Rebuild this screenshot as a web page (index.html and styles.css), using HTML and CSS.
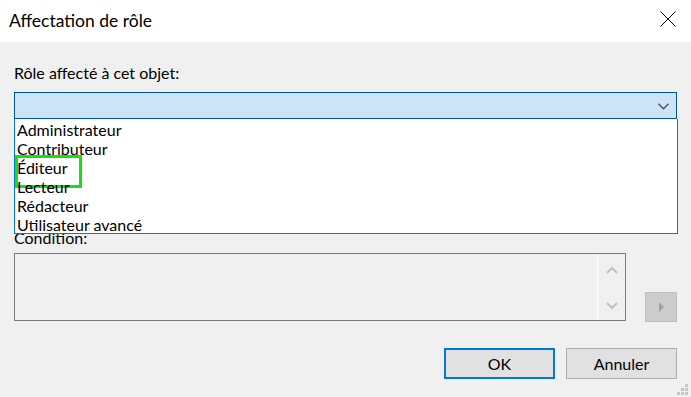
FILE: index.html
```html
<!DOCTYPE html>
<html lang="fr">
<head>
<meta charset="utf-8">
<title>Affectation de rôle</title>
<link rel="stylesheet" href="styles.css">
</head>
<body>
<div class="window">
  <header class="titlebar">
    <span class="title">Affectation de rôle</span>
    <svg class="close" width="16" height="16" viewBox="0 0 16 16"><path d="M0.5 0.5L15.5 15.5M15.5 0.5L0.5 15.5" stroke="#000" stroke-width="1" fill="none"/></svg>
  </header>
  <main class="content">
    <div class="field-label">Rôle affecté à cet objet:</div>
    <div class="combo-wrap">
      <div class="combo">
        <svg class="chevron" width="11" height="7" viewBox="0 0 11 7"><path d="M0.5 0.8L5.5 5.8L10.5 0.8" stroke="#4a4a4a" stroke-width="1.3" fill="none"/></svg>
      </div>
      <ul class="dropdown">
        <li>Administrateur</li>
        <li>Contributeur</li>
        <li class="marked">Éditeur</li>
        <li>Lecteur</li>
        <li>Rédacteur</li>
        <li>Utilisateur avancé</li>
      </ul>
    </div>
    <div class="cond-label">Condition:</div>
    <div class="cond-row">
      <div class="textarea">
        <div class="text-area-body"></div>
        <div class="vscroll">
          <svg width="12" height="8" viewBox="0 0 12 8"><path d="M1 7L6 2L11 7" stroke="#c2c2c2" stroke-width="2" fill="none"/></svg>
          <svg width="12" height="8" viewBox="0 0 12 8"><path d="M1 1L6 6L11 1" stroke="#c2c2c2" stroke-width="2" fill="none"/></svg>
        </div>
      </div>
      <button class="arrow-btn" type="button"><svg width="5" height="10" viewBox="0 0 5 10"><path d="M0 0L5 5L0 10Z" fill="#a0a0a0"/></svg></button>
    </div>
    <div class="actions">
      <button class="btn btn-default" type="button">OK</button>
      <button class="btn" type="button">Annuler</button>
    </div>
  </main>
  <svg class="grip" width="12" height="12" viewBox="0 0 12 12">
    <rect x="8" y="0" width="3" height="3" fill="#c6c6c6"/>
    <rect x="4" y="4" width="3" height="3" fill="#c6c6c6"/>
    <rect x="8" y="4" width="3" height="3" fill="#c6c6c6"/>
    <rect x="0" y="8" width="3" height="3" fill="#c6c6c6"/>
    <rect x="4" y="8" width="3" height="3" fill="#c6c6c6"/>
    <rect x="8" y="8" width="3" height="3" fill="#c6c6c6"/>
  </svg>
</div>
</body>
</html>
```

FILE: styles.css
```css
* { box-sizing: border-box; }
html, body { margin: 0; padding: 0; }
body {
  width: 691px;
  height: 397px;
  overflow: hidden;
  font-family: Lato, "Noto Sans", "Liberation Sans", sans-serif;
  color: #000;
}
.window {
  position: relative;
  width: 691px;
  height: 397px;
  background: #f0f0f0;
}
.titlebar {
  height: 42px;
  background: #fff;
  display: flex;
  align-items: center;
  justify-content: space-between;
  padding: 0 15px 0 9px;
}
.title {
  font-size: 17.5px;
  padding-bottom: 2px;
}
.close { margin-top: -4px; }
.content {
  padding: 0 14px;
}
.field-label {
  margin-top: 20px;
  height: 22px;
  line-height: 22px;
  font-size: 16px;
}
.combo-wrap {
  position: relative;
  margin-top: 8px;
}
.combo {
  height: 27px;
  background: #cce4f7;
  border: 1px solid #005499;
  display: flex;
  align-items: center;
  justify-content: flex-end;
  padding-right: 7px;
}
.chevron { margin-top: 1px; }
.dropdown {
  position: absolute;
  top: 27px;
  left: 0;
  width: 664px;
  height: 115px;
  margin: 0;
  padding: 1px 0 0 2px;
  list-style: none;
  background: #fff;
  border: 1px solid #0078d7;
  border-top: none;
  z-index: 2;
  font-size: 16px;
}
.dropdown li {
  height: 19px;
  line-height: 19px;
  position: relative;
  white-space: nowrap;
}
.dropdown li.marked::after {
  content: "";
  position: absolute;
  left: -2px;
  top: -3px;
  width: 61px;
  height: 27px;
  border: 3px solid #14e014;
}
.cond-label {
  margin-top: 108px;
  height: 26px;
  line-height: 22px;
  font-size: 16px;
}
.cond-row {
  display: flex;
  align-items: flex-end;
  gap: 19px;
}
.textarea {
  width: 612px;
  height: 68px;
  border: 1px solid #7a7a7a;
  background: #f0f0f0;
  display: flex;
}
.text-area-body { flex: 1; }
.vscroll {
  width: 28px;
  border-left: 1px solid #fff;
  display: flex;
  flex-direction: column;
  justify-content: space-between;
  align-items: center;
  padding: 12px 0 10px 1px;
}
.vscroll svg { display: block; }
.arrow-btn {
  width: 32px;
  height: 30px;
  margin: 0 0 -1px 0;
  padding: 0;
  background: #cccccc;
  border: 1px solid #bfbfbf;
  display: flex;
  align-items: center;
  justify-content: center;
}
.arrow-btn svg { margin-left: 1px; }
.actions {
  display: flex;
  justify-content: flex-end;
  gap: 11px;
  margin-top: 27px;
}
.btn {
  width: 111px;
  height: 31px;
  background: #e1e1e1;
  border: 1px solid #adadad;
  font-family: inherit;
  font-size: 16px;
  color: #000;
  padding: 0;
}
.btn-default {
  border: 2px solid #0078d7;
}
.grip {
  position: absolute;
  right: 2px;
  bottom: 1px;
}
```
